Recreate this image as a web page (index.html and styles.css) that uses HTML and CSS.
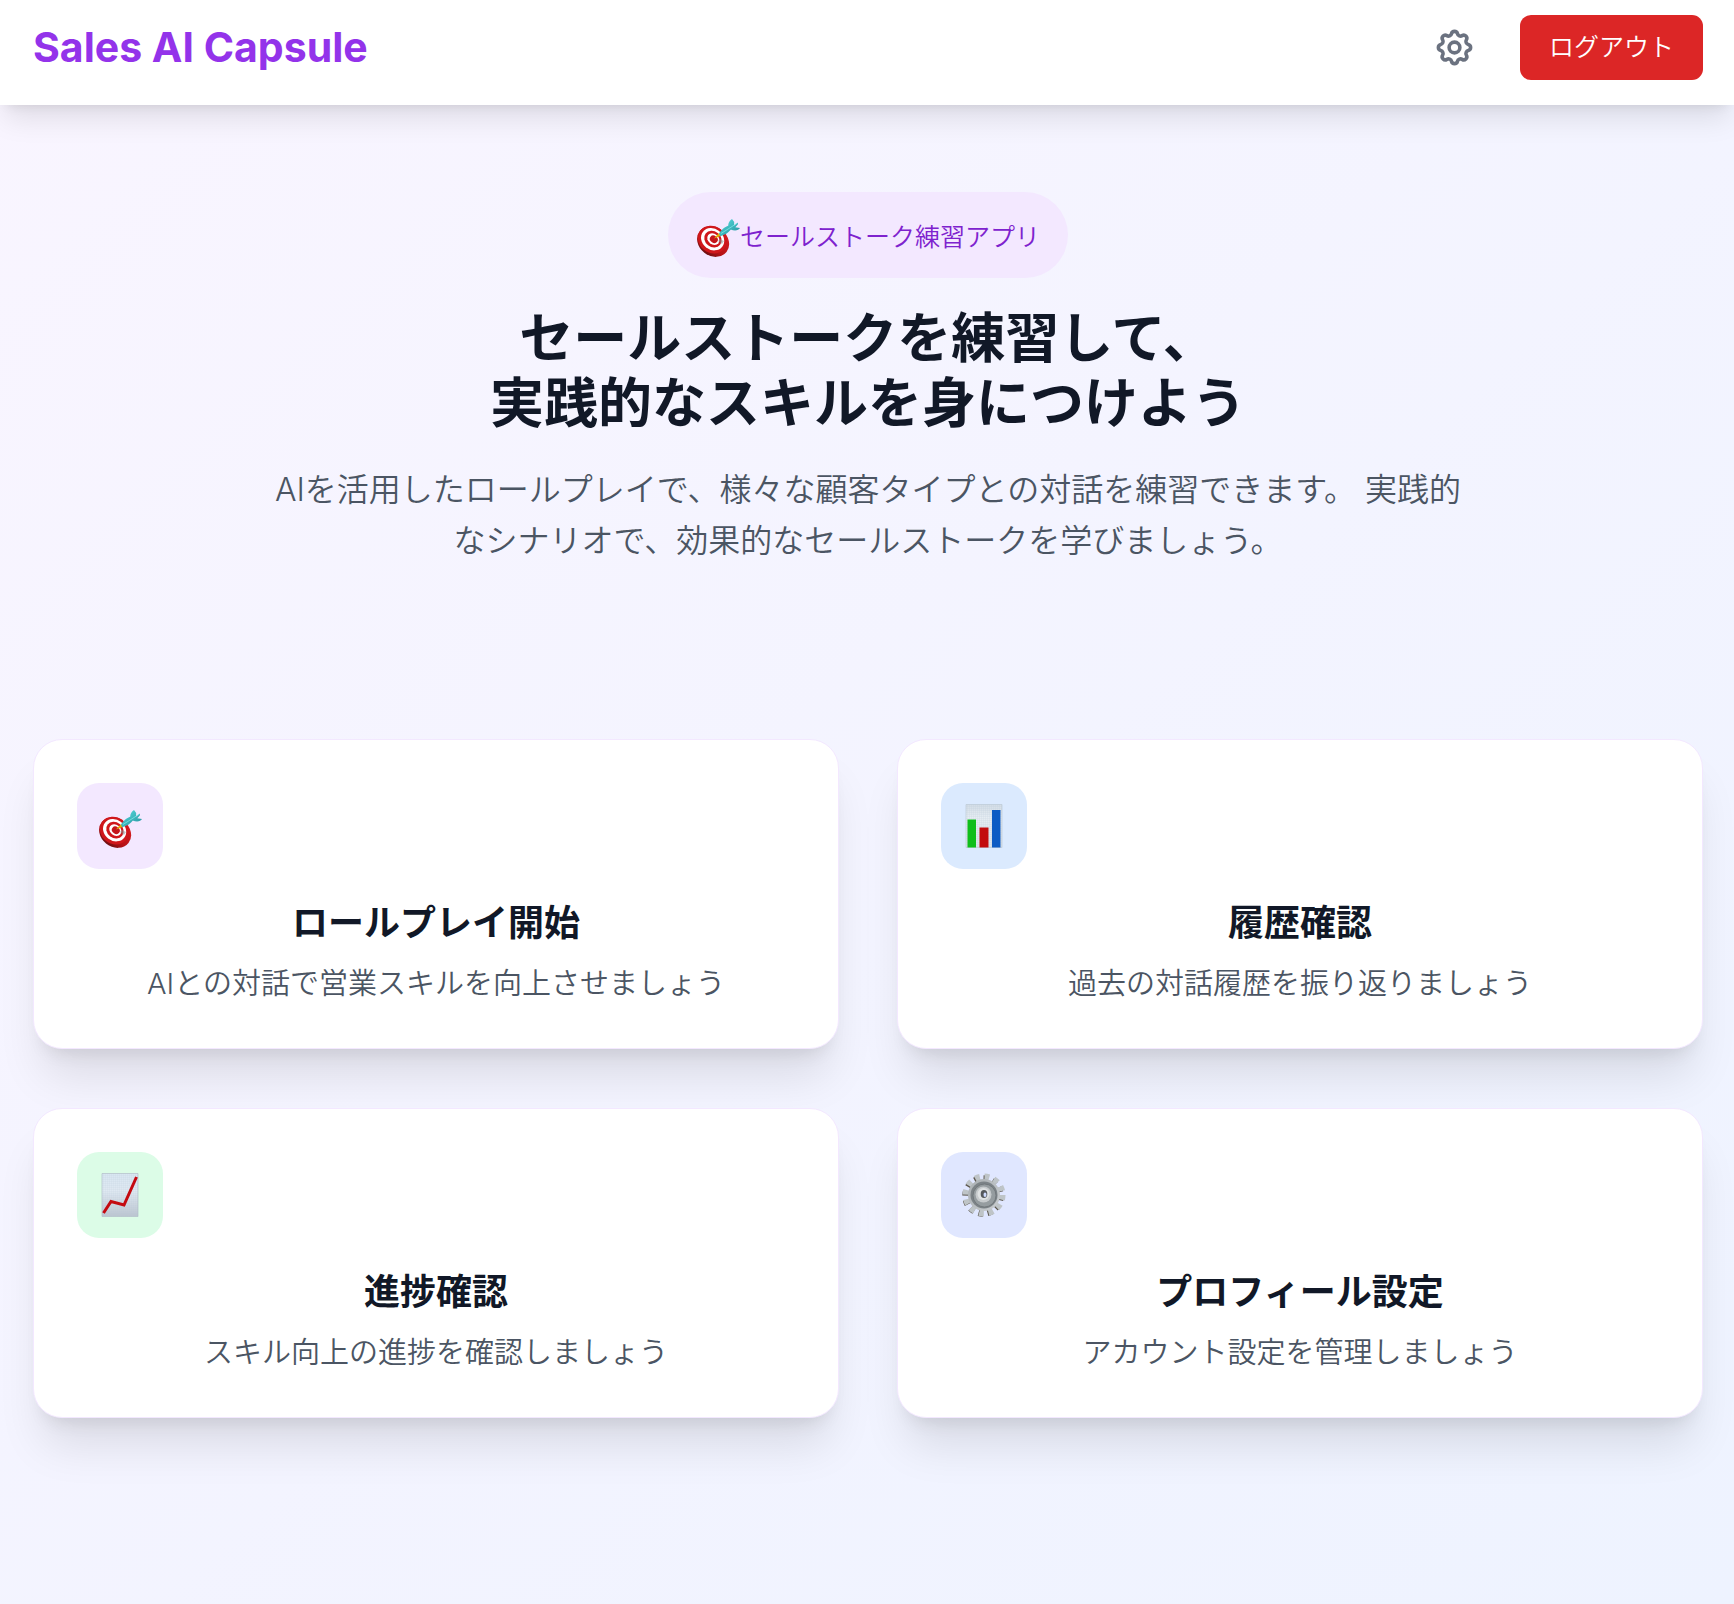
FILE: index.html
```
<!DOCTYPE html>
<html lang="ja">
<head>
  <meta charset="UTF-8" />
  <meta name="viewport" content="width=device-width, initial-scale=1.0"/>
  <title>Sales AI Capsule</title>
  <link rel="stylesheet" href="styles.css">
</head>
<body>
  <!-- shared drawings -->
  <svg class="sprite" aria-hidden="true">
    <defs>
      <linearGradient id="paper" x1="0" y1="0" x2="0" y2="1">
        <stop offset="0" stop-color="#d9e7f2"/>
        <stop offset="0.4" stop-color="#dfe9f2"/>
        <stop offset="1" stop-color="#bcc5d0"/>
      </linearGradient>
      <linearGradient id="paperLight" x1="0" y1="0" x2="0" y2="1">
        <stop offset="0" stop-color="#d3dde6"/>
        <stop offset="0.3" stop-color="#e6edf3"/>
        <stop offset="1" stop-color="#dbe3eb"/>
      </linearGradient>
      <linearGradient id="rim" x1="0" y1="0" x2="0" y2="1">
        <stop offset="0" stop-color="#d81e20"/>
        <stop offset="0.7" stop-color="#b51216"/>
        <stop offset="1" stop-color="#6e1012"/>
      </linearGradient>
      <linearGradient id="dart" x1="0" y1="0" x2="1" y2="1">
        <stop offset="0" stop-color="#4fd0d4"/>
        <stop offset="1" stop-color="#2a9ba4"/>
      </linearGradient>
      <linearGradient id="steel" x1="0" y1="0" x2="1" y2="1">
        <stop offset="0" stop-color="#a9afb2"/>
        <stop offset="1" stop-color="#c9cdd0"/>
      </linearGradient>
      <pattern id="grid" width="2" height="2" patternUnits="userSpaceOnUse">
        <path d="M0 0H2M0 0V2" stroke="#b4c4d2" stroke-width="0.5" fill="none"/>
      </pattern>
      <symbol id="target" viewBox="-1 -6 44 44">
        <g transform="rotate(38 15 21)">
          <ellipse cx="16.8" cy="21.5" rx="17" ry="14.3" fill="url(#rim)"/>
          <ellipse cx="15" cy="20.5" rx="15" ry="13.3" fill="#cf171b"/>
          <ellipse cx="15" cy="20" rx="12.2" ry="10.5" fill="#fff"/>
          <ellipse cx="15.2" cy="19.8" rx="9.2" ry="7.8" fill="#cf171b"/>
          <ellipse cx="15.5" cy="19.5" rx="6.5" ry="5.3" fill="#fff"/>
          <ellipse cx="16" cy="19.3" rx="4.2" ry="3.5" fill="#c4161a"/>
        </g>
        <path d="M23 20l4 2-2 3-4-3z" fill="#7f918f" opacity="0.5"/>
        <path d="M17 19.4l5-5.4 2.6 2.6z" fill="#e5b000"/>
        <path d="M22 14.5c2-3.5 6-7 10-8l2.5 3c-2 3.5-7 7-11.5 7.5z" fill="url(#dart)"/>
        <path d="M31.5 8c-.8-3 .8-6.500 3.500-8l2.200 3-.2 3.500 4-3-.2 2-2.500 2.700 4.700.8c-1.500 2.200-4.500 3.500-9.500 1.500z" fill="url(#dart)"/>
        <path d="M24 14.5l9-5.7 7-4.5" stroke="#7fe6e6" stroke-width="0.8" fill="none"/>
      </symbol>
      <symbol id="bars" viewBox="0 0 44 44">
        <g transform="translate(3 0)">
          <path d="M1 .5h36v43H1z" fill="url(#paperLight)"/>
          <path d="M1 .5h36v43H1z" fill="url(#grid)" opacity="0.6"/>
          <path d="M1 .5h36v43H1z" fill="none" stroke="#bdcad6" stroke-width="0.7"/>
          <path d="M2.5 15.5H11v28H2.5z" fill="#0fbe1b"/>
          <path d="M14.5 23.5h9v20h-9z" fill="#c20b0e"/>
          <path d="M27 6h8.500v37.500H27z" fill="#0c5bc4"/>
        </g>
      </symbol>
      <symbol id="trend" viewBox="0 0 44 44">
        <g transform="translate(3 0)">
          <path d="M1 .5h36v43H1z" fill="url(#paper)"/>
          <path d="M1 .5h36v43H1z" fill="url(#grid)" opacity="0.5"/>
          <path d="M1 .5h36v43H1z" fill="none" stroke="#b3bfca" stroke-width="0.7"/>
          <path d="M2.5 40L10 28.500 23 32 35.500 4" fill="none" stroke="#c40a10" stroke-width="3"/>
        </g>
      </symbol>
      <symbol id="cog" viewBox="0 0 44 44">
        <circle cx="21" cy="23" r="17.5" fill="none" stroke="#5d584f" stroke-width="6.5" stroke-dasharray="4.4 4.763"/>
        <circle cx="22" cy="22" r="18" fill="none" stroke="#bec4c7" stroke-width="7" stroke-dasharray="4.7 4.725"/>
        <circle cx="22" cy="22" r="16" fill="url(#steel)"/>
        <circle cx="22" cy="22" r="13.5" fill="#7c8387"/>
        <circle cx="22.5" cy="22.5" r="11.5" fill="#959c9f" stroke="#6a7074" stroke-width="0.8"/>
        <circle cx="21.5" cy="21.5" r="8" fill="#c6cacc"/>
        <circle cx="21.5" cy="21" r="6" fill="#dfe2e3"/>
        <ellipse cx="22" cy="21" rx="3.3" ry="4" fill="#55585c"/>
        <ellipse cx="23" cy="21.8" rx="1.5" ry="2.3" fill="#cfdcff"/>
      </symbol>
    </defs>
  </svg>

  <header class="header">
    <h1 class="logo">Sales AI Capsule</h1>
    <div class="header-actions">
      <button class="settings-btn" aria-label="設定">
        <svg viewBox="0 0 24 24" fill="none" stroke="currentColor" stroke-width="2" stroke-linecap="round" stroke-linejoin="round">
          <path d="M10.325 4.317c.426-1.756 2.924-1.756 3.350 0a1.724 1.724 0 002.573 1.066c1.543-.94 3.310.826 2.370 2.370a1.724 1.724 0 001.065 2.572c1.756.426 1.756 2.924 0 3.350a1.724 1.724 0 00-1.066 2.573c.94 1.543-.826 3.310-2.370 2.370a1.724 1.724 0 00-2.572 1.065c-.426 1.756-2.924 1.756-3.350 0a1.724 1.724 0 00-2.573-1.066c-1.543.94-3.310-.826-2.370-2.370a1.724 1.724 0 00-1.065-2.572c-1.756-.426-1.756-2.924 0-3.350a1.724 1.724 0 001.066-2.573c-.94-1.543.826-3.310 2.370-2.370.996.608 2.296.07 2.572-1.065z"/>
          <path d="M15 12a3 3 0 11-6 0 3 3 0 016 0z"/>
        </svg>
      </button>
      <button class="logout-btn">ログアウト</button>
    </div>
  </header>

  <main class="main">
    <section class="hero">
      <div class="badge">
        <svg class="emoji"><use href="#target"/></svg>
        <span>セールストーク練習アプリ</span>
      </div>
      <h2 class="hero-title">セールストークを練習して、<br>実践的なスキルを身につけよう</h2>
      <p class="hero-desc">AIを活用したロールプレイで、様々な顧客タイプとの対話を練習できます。 実践的なシナリオで、効果的なセールストークを学びましょう。</p>
    </section>

    <section class="cards">
      <button class="card">
        <span class="card-icon purple"><svg class="emoji"><use href="#target"/></svg></span>
        <span class="card-title">ロールプレイ開始</span>
        <span class="card-desc">AIとの対話で営業スキルを向上させましょう</span>
      </button>
      <button class="card">
        <span class="card-icon blue"><svg class="emoji"><use href="#bars"/></svg></span>
        <span class="card-title">履歴確認</span>
        <span class="card-desc">過去の対話履歴を振り返りましょう</span>
      </button>
      <button class="card">
        <span class="card-icon green"><svg class="emoji"><use href="#trend"/></svg></span>
        <span class="card-title">進捗確認</span>
        <span class="card-desc">スキル向上の進捗を確認しましょう</span>
      </button>
      <button class="card">
        <span class="card-icon indigo"><svg class="emoji"><use href="#cog"/></svg></span>
        <span class="card-title">プロフィール設定</span>
        <span class="card-desc">アカウント設定を管理しましょう</span>
      </button>
    </section>
  </main>
</body>
</html>
```
FILE: styles.css
```
* {
  box-sizing: border-box;
}

body {
  margin: 0;
  min-height: 100vh;
  font-family: Inter, "Noto Sans CJK JP", sans-serif;
  font-weight: 350;
  color: #111827;
  background: linear-gradient(to bottom right, #f9f5ff, #eef3ff);
}

button {
  border: none;
  font-family: inherit;
  font-weight: inherit;
  cursor: pointer;
}

.sprite {
  position: absolute;
  width: 0;
  height: 0;
}

.header {
  display: flex;
  justify-content: space-between;
  align-items: center;
  padding: 15px 31px 25px 33px;
  background: #fff;
  box-shadow: 0 18px 27px -5px rgba(0,0,0,0.1), 0 7px 11px -7px rgba(0,0,0,0.1);
}

.logo {
  margin: 0;
  font-size: 41px;
  line-height: 65px;
  font-weight: 700;
  color: #9333ea;
}

.header-actions {
  display: flex;
  align-items: center;
  gap: 33px;
}

.settings-btn {
  display: flex;
  padding: 11px;
  color: #6b7280;
  background: none;
}

.settings-btn svg {
  width: 43px;
  height: 43px;
}

.logout-btn {
  padding: 0 29px;
  font-size: 25px;
  line-height: 65px;
  color: #fff;
  background: #dc2626;
  border-radius: 11px;
}

.main {
  padding: 87px 31px 186px 33px;
}

.hero {
  display: flex;
  flex-direction: column;
  align-items: center;
  text-align: center;
  margin-bottom: 173px;
}

.badge {
  display: flex;
  align-items: center;
  height: 86px;
  padding: 0 28px;
  font-size: 25px;
  color: #7e22ce;
  background: #f3e8ff;
  border-radius: 43px;
}

.hero-title {
  margin: 28px 0;
  font-size: 54px;
  line-height: 65px;
  font-weight: 700;
}

.hero-desc {
  max-width: 1204px;
  margin: 0;
  font-size: 32px;
  line-height: 51px;
  color: #4b5563;
}

.cards {
  display: grid;
  grid-template-columns: 1fr 1fr;
  gap: 59px 58px;
}

.card {
  display: flex;
  flex-direction: column;
  align-items: center;
  padding: 43px;
  color: #111827;
  background: #fff;
  border: 1px solid #f3e8ff;
  border-radius: 29px;
  box-shadow: 0 36px 45px -9px rgba(0,0,0,0.1), 0 14px 18px -11px rgba(0,0,0,0.1);
}

.card-icon {
  display: flex;
  align-items: center;
  justify-content: center;
  align-self: flex-start;
  width: 86px;
  height: 86px;
  margin-bottom: 29px;
  border-radius: 22px;
}

.purple { background: #f3e8ff; }
.blue { background: #dbeafe; }
.green { background: #dcfce7; }
.indigo { background: #e0e7ff; }

.emoji {
  width: 44px;
  height: 44px;
}

.card-title {
  margin-bottom: 14px;
  font-size: 36px;
  line-height: 50px;
  font-weight: 700;
}

.card-desc {
  font-size: 29px;
  line-height: 43px;
  color: #4b5563;
}
```
